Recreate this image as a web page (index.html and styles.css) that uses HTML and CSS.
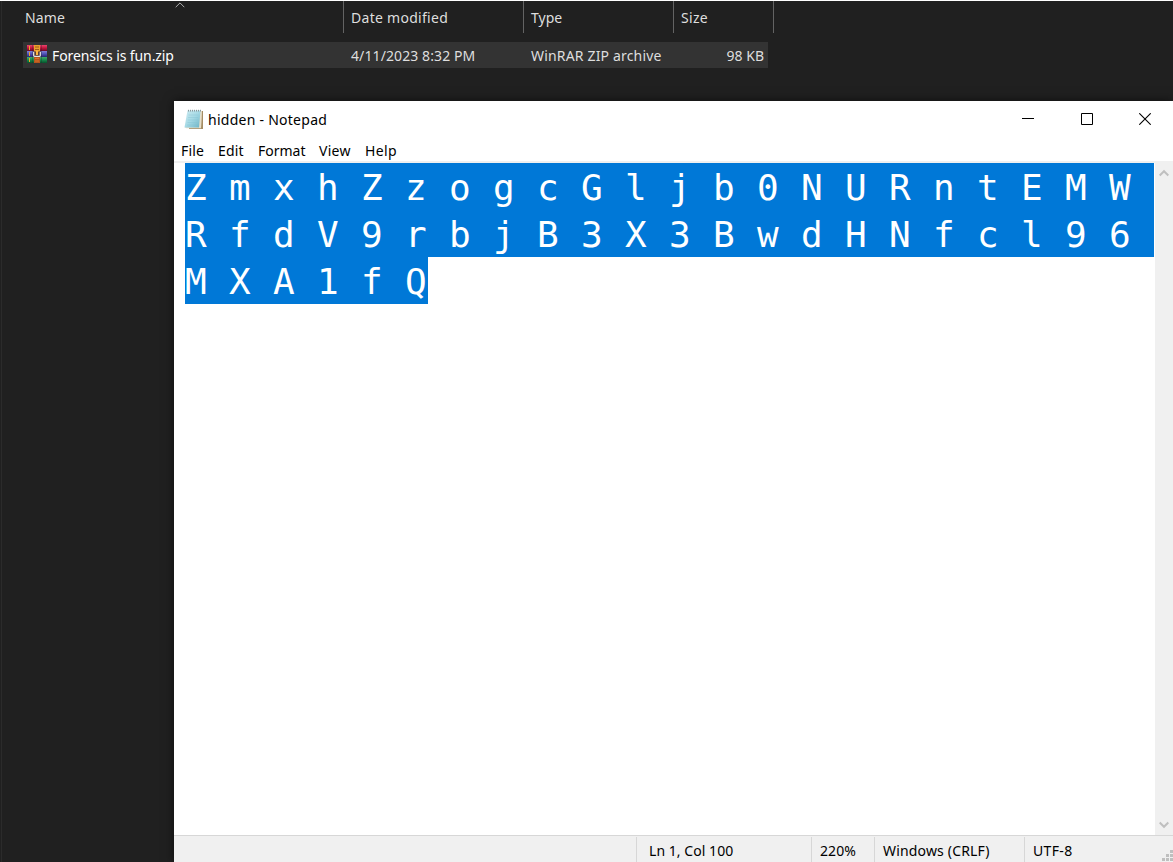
FILE: index.html
```html
<!DOCTYPE html>
<html lang="en">
<head>
<meta charset="utf-8">
<title>hidden - Notepad</title>
<link rel="stylesheet" href="styles.css">
</head>
<body>
<main class="desktop">
  <section class="explorer">
    <div class="columns">
      <div class="col col-name"><span>Name</span>
        <svg class="sort" width="10" height="6" viewBox="0 0 10 6"><path d="M.7 5.200 5 .9l4.300 4.300" fill="none" stroke="#b0b0b0"/></svg>
      </div>
      <div class="col col-date"><span class="t-date">Date modified</span></div>
      <div class="col col-type"><span class="t-type">Type</span></div>
      <div class="col col-size"><span class="t-size">Size</span></div>
    </div>
    <div class="file-row">
      <div class="cell cell-name">
        <svg class="zip-icon" width="20" height="18" viewBox="0 0 20 18">
          <defs>
            <linearGradient id="r" x2="0" y2="1"><stop stop-color="#e8476f"/><stop offset=".5" stop-color="#c4143c"/><stop offset="1" stop-color="#650c28"/></linearGradient>
            <linearGradient id="b" x2="0" y2="1"><stop stop-color="#7f82d8"/><stop offset=".5" stop-color="#4e50b5"/><stop offset="1" stop-color="#25266f"/></linearGradient>
            <linearGradient id="g" x2="0" y2="1"><stop stop-color="#42a96a"/><stop offset=".5" stop-color="#16894a"/><stop offset="1" stop-color="#07512d"/></linearGradient>
          </defs>
          <path fill="url(#r)" d="M0 0h20v6H0z"/><path fill="url(#b)" d="M0 6h20v6H0z"/><path fill="url(#g)" d="M0 12h20v6H0z"/>
          <path d="M2.500 1v4m0 2v4m0 2v4" stroke="#e9a62b"/>
          <path d="M5.500 0v18m9-18v18" stroke="#222" opacity=".3"/>
          <path fill="#b5551d" d="M7 11h6v7H7z"/>
          <path fill="#eba02e" d="M7 0h6v7H7z"/>
          <path d="M8 2h4m-4 2.500h4" stroke="#8a4b12" stroke-width=".8"/>
          <path fill="#4a3030" d="M6 6.500h8v5H6z"/>
          <path d="M6.700 7v3.500q0 .8.800.8h5q.8 0 .8-.8V7" fill="none" stroke="#e4e4e4" stroke-width="1.300"/>
          <path d="M10 5.500v4.500" stroke="#ffb640" stroke-width="2.200"/>
          <path d="M8 13.500h4m-4 2.500h4" stroke="#de7b2d" stroke-width=".8"/>
        </svg>
        <span class="f-name">Forensics is fun.zip</span>
      </div>
      <div class="cell cell-date"><span class="f-date">4/11/2023 8:32 PM</span></div>
      <div class="cell cell-type"><span class="f-type">WinRAR ZIP archive</span></div>
      <div class="cell cell-size"><span>98 KB</span></div>
    </div>
  </section>

  <section class="notepad">
    <header class="titlebar">
      <svg width="20" height="22" viewBox="0 0 20 22">
        <defs><linearGradient id="n" x2="1" y2="1"><stop stop-color="#cfecf2"/><stop offset=".5" stop-color="#a5d9e5"/><stop offset="1" stop-color="#6cb3c5"/></linearGradient></defs>
        <path fill="#a58d64" d="M17.500 2H19v18H5v-1h12z"/>
        <path fill="#e7dfca" d="M16 2h1.800l-.8 17.300H2L1 18z"/>
        <path fill="url(#n)" d="M3.500 1.500h13L15 18.500H.5z"/>
        <path d="M4.500 6h10M4.200 8.500h10M3.900 11h10M3.500 13.500h10M3 16h10" stroke="#84c3d1" stroke-width=".4"/>
        <path d="M4.500 2.500V.8m2 1.700V.8m2 1.700V.8m2 1.700V.8m2 1.700V.8m2 1.700V.8m2 1.700V.8" stroke="#87979a"/>
      </svg>
      <h1 class="title"><span>hidden - Notepad</span></h1>
      <div class="controls">
        <svg width="12" height="12" viewBox="0 0 12 12"><path d="M0 5.500h12" stroke="#000"/></svg>
        <svg width="12" height="12" viewBox="0 0 12 12"><path d="M.5.5h11v11H.5z" fill="none" stroke="#000"/></svg>
        <svg width="12" height="12" viewBox="0 0 12 12"><path d="m.3.3 11.400 11.400M11.700.3.3 11.700" stroke="#000" stroke-width="1.100"/></svg>
      </div>
    </header>
    <nav class="menu">
      <span class="m-file">File</span><span class="m-edit">Edit</span><span class="m-format">Format</span><span class="m-view">View</span><span class="m-help">Help</span>
    </nav>
    <div class="editor">
      <div class="text">
        <div class="line full">Z m x h Z z o g c G l j b 0 N U R n t E M W</div>
        <div class="line full">R f d V 9 r b j B 3 X 3 B w d H N f c l 9 6</div>
        <div class="line last">M X A 1 f Q</div>
      </div>
      <div class="scrollbar">
        <svg width="10" height="8" viewBox="0 0 10 8"><path d="M.7 6.500 5 2.200l4.300 4.300" fill="none" stroke="#bfbfbf" stroke-width="2"/></svg>
        <svg width="10" height="8" viewBox="0 0 10 8"><path d="M.7 1.500 5 5.800l4.300-4.300" fill="none" stroke="#bfbfbf" stroke-width="2"/></svg>
      </div>
    </div>
    <footer class="status">
      <div class="s s-pos"><span>Ln 1, Col 100</span></div>
      <div class="s s-zoom"><span>220%</span></div>
      <div class="s s-eol"><span>Windows (CRLF)</span></div>
      <div class="s s-enc"><span>UTF-8</span></div>
      <svg class="grip" width="11" height="11" viewBox="0 0 11 11"><path fill="#bfbfbf" d="M8 0h3v3H8zM4 4h3v3H4zM8 4h3v3H8zM0 8h3v3H0zM4 8h3v3H4zM8 8h3v3H8z"/></svg>
    </footer>
  </section>
</main>
</body>
</html>
```
FILE: styles.css
```css
* { box-sizing: border-box; }
body { margin: 0; width: 1173px; height: 862px; overflow: hidden; font: 14px/20px "Noto Sans", "Open Sans", sans-serif; }
svg { display: block; flex: none; }
span { white-space: nowrap; }
.desktop { height: 862px; display: flex; flex-direction: column; background: linear-gradient(90deg, transparent 1px, #2b2b2b 1px, #2b2b2b 2px, transparent 2px), #202020; border-top: 1px solid #fff; }
.explorer { height: 100px; flex: none; }
.columns { display: flex; height: 32px; padding-left: 23px; color: #dedede; }
.col { position: relative; border-right: 1px solid #636363; padding: 7px 0 0 7px; }
.col-name { width: 321px; padding-left: 2px; letter-spacing: .1px; }
.col-date { width: 180px; }
.col-type { width: 150px; }
.col-size { width: 100px; }
.t-date { letter-spacing: .28px; }
.t-size { letter-spacing: .3px; }
.sort { position: absolute; left: 152px; top: 1px; }
.file-row { display: flex; height: 26px; width: 745px; margin: 9px 0 0 23px; background: #333; color: #dedede; }
.cell { padding-top: 4px; }
.cell-name { width: 328px; display: flex; gap: 5px; padding-left: 4px; color: #fff; }
.zip-icon { margin-top: -1px; }
.f-name { letter-spacing: -.1px; }
.f-date { letter-spacing: .1px; }
.f-type { letter-spacing: .17px; }
.cell-date { width: 180px; }
.cell-type { width: 150px; }
.cell-size { flex: 1; text-align: right; padding-right: 4px; }
.notepad { flex: 1; margin-left: 174px; min-height: 0; display: flex; flex-direction: column; background: #fff; box-shadow: 0 0 10px rgba(0,0,0,.6); color: #000; }
.titlebar { height: 37px; display: flex; align-items: center; padding: 0 22px 0 10px; gap: 4px; }
.title { margin: 0; font: inherit; flex: 1; letter-spacing: .26px; }
.controls { display: flex; gap: 46.5px; margin-top: -1px; }
.menu { height: 25px; display: flex; padding: 3px 0 0 7px; border-bottom: 2px solid #f0f0f0; }
.m-file { width: 37px; letter-spacing: .2px; }
.m-edit { width: 40px; letter-spacing: .2px; }
.m-format { width: 61px; }
.m-view { width: 46px; letter-spacing: .3px; }
.m-help { letter-spacing: .4px; }
.editor { flex: 1; min-height: 0; display: flex; }
.text { flex: 1; padding-left: 11px; font: 36px/47px "DejaVu Sans Mono", monospace; letter-spacing: .327px; color: #fff; }
.line { height: 47px; line-height: 49px; background: #0078d7; white-space: pre; overflow: hidden; }
.full { width: 969px; }
.last { width: 243px; }
.scrollbar { width: 18px; background: #f0f0f0; display: flex; flex-direction: column; justify-content: space-between; align-items: center; padding: 6px 0; }
.status { height: 27px; background: #f0f0f0; border-top: 1px solid #d7d7d7; padding: 1px 0 0 462px; display: flex; position: relative; }
.s { border-left: 1px solid #d7d7d7; padding: 4px 0 0 8px; }
.s-pos { width: 175px; padding-left: 12px; letter-spacing: .05px; }
.s-zoom { width: 63px; letter-spacing: .1px; }
.s-eol { width: 150px; letter-spacing: .17px; }
.s-enc { flex: 1; letter-spacing: .35px; }
.grip { position: absolute; right: 0; bottom: 1px; }
```
